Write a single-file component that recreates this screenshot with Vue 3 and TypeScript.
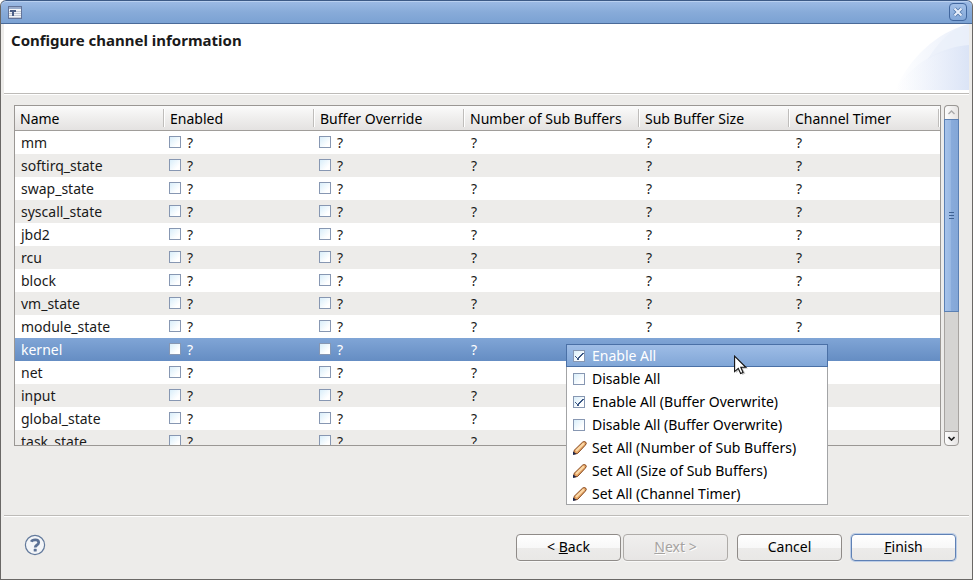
<script setup lang="ts">
import { reactive, ref } from 'vue'

interface Channel {
  name: string
  enabled: boolean
  override: boolean
}

interface MenuEntry {
  label: string
  kind: 'check' | 'edit'
  checked?: boolean
}

const columns: string[] = ['Name', 'Enabled', 'Buffer Override', 'Number of Sub Buffers', 'Sub Buffer Size', 'Channel Timer']

const channels = reactive<Channel[]>(
  ['mm', 'softirq_state', 'swap_state', 'syscall_state', 'jbd2', 'rcu', 'block', 'vm_state', 'module_state', 'kernel', 'net', 'input', 'global_state', 'task_state']
    .map((name) => ({ name, enabled: false, override: false })),
)

const selected = ref('kernel')

const menu = reactive<MenuEntry[]>([
  { label: 'Enable All', kind: 'check', checked: true },
  { label: 'Disable All', kind: 'check', checked: false },
  { label: 'Enable All (Buffer Overwrite)', kind: 'check', checked: true },
  { label: 'Disable All (Buffer Overwrite)', kind: 'check', checked: false },
  { label: 'Set All (Number of Sub Buffers)', kind: 'edit' },
  { label: 'Set All (Size of Sub Buffers)', kind: 'edit' },
  { label: 'Set All (Channel Timer)', kind: 'edit' },
])
const activeEntry = ref(0)
</script>

<template>
  <div class="window">
    <header class="titlebar">
      <svg class="app-icon" width="14" height="13" viewBox="0 0 14 13" shape-rendering="crispEdges">
        <rect width="14" height="13" fill="#63749a" />
        <rect x="1" y="1" width="12" height="2" fill="#9aaccb" />
        <rect x="1" y="3" width="12" height="9" fill="#f3f5f8" />
        <rect x="1" y="5" width="12" height="1" fill="#c4cad5" />
        <rect x="1" y="7" width="12" height="1" fill="#c4cad5" />
        <rect x="1" y="9" width="12" height="1" fill="#c4cad5" />
        <rect x="1" y="11" width="12" height="1" fill="#c4cad5" />
        <path d="M2 4h6v2H6v4H4V6H2z" fill="#4d6086" />
      </svg>
      <button class="close" type="button" aria-label="Close">
        <svg width="10" height="10" viewBox="0 0 10 10">
          <path d="M1.5 1.5l7 7M8.5 1.5l-7 7" stroke="#4f75a8" stroke-width="3.8" />
          <path d="M1.5 1.5l7 7M8.5 1.5l-7 7" stroke="#e6eefa" stroke-width="2.2" />
        </svg>
      </button>
    </header>

    <section class="banner">
      <h1>Configure channel information</h1>
      <svg class="swoosh" width="74" height="66" viewBox="0 0 74 66">
        <defs>
          <linearGradient id="outer" x1="0" x2="1">
            <stop offset="0" stop-color="#fff" />
            <stop offset="1" stop-color="#e8eefa" />
          </linearGradient>
          <linearGradient id="inner" x1="0" x2="1">
            <stop offset="0" stop-color="#f6f8fd" stop-opacity="0" />
            <stop offset="1" stop-color="#dbe4f6" />
          </linearGradient>
        </defs>
        <path d="M0 66C15 34 40 9 74 0v66z" fill="url(#outer)" />
        <path d="M33 35C42 20 55 5 74 0v24C59 24 45 28 33 35z" fill="#e9effa" opacity=".7" />
        <path d="M0 66C20 36 48 23 74 21v45z" fill="url(#inner)" />
      </svg>
    </section>

    <main class="content">
      <div class="table-frame">
        <table>
          <colgroup>
            <col class="col" /><col class="col" /><col class="col" /><col class="col-wide" /><col class="col" /><col />
          </colgroup>
          <thead>
            <tr>
              <th v-for="c in columns" :key="c" scope="col">{{ c }}</th>
            </tr>
          </thead>
          <tbody>
            <tr v-for="ch in channels" :key="ch.name" :class="{ selected: ch.name === selected }" @click="selected = ch.name">
              <td>{{ ch.name }}</td>
              <td><label class="cell"><input v-model="ch.enabled" class="tick" type="checkbox" />?</label></td>
              <td><label class="cell"><input v-model="ch.override" class="tick" type="checkbox" />?</label></td>
              <td>?</td>
              <td>?</td>
              <td>?</td>
            </tr>
          </tbody>
        </table>
      </div>
      <div class="scrollbar">
        <button class="step up" type="button" aria-label="Scroll up">
          <svg width="7" height="5" viewBox="0 0 7 5"><path d="M.5 4l3-3 3 3" fill="none" stroke="#aaa" stroke-width="1.4" /></svg>
        </button>
        <div class="thumb">
          <i></i><i></i><i></i>
        </div>
        <div class="track"></div>
        <button class="step down" type="button" aria-label="Scroll down">
          <svg width="7" height="5" viewBox="0 0 7 5"><path d="M.5 1l3 3 3-3" fill="none" stroke="#222" stroke-width="1.7" /></svg>
        </button>
      </div>
    </main>

    <footer class="actions">
      <button class="help" type="button" aria-label="Help">
        <svg width="22" height="22" viewBox="0 0 22 22">
          <circle cx="11" cy="11" r="9.6" fill="#f3f5f8" stroke="#62799b" stroke-width="1.2" />
          <path d="M7.3 7.7C8.3 5.3 14.7 4.8 14.7 8.5c0 2.7-3.5 2.3-3.5 5" fill="none" stroke="#5b7195" stroke-width="2.7" />
          <rect x="9.7" y="14.8" width="3" height="2.8" rx=".6" fill="#5b7195" />
        </svg>
      </button>
      <div class="pair">
        <button class="btn" type="button"><span>&lt; <u>B</u>ack</span></button>
        <button class="btn" type="button" disabled><span><u>N</u>ext &gt;</span></button>
      </div>
      <button class="btn" type="button">Cancel</button>
      <button class="btn primary" type="button"><span><u>F</u>inish</span></button>
    </footer>

    <div class="menu">
      <template v-for="(entry, i) in menu" :key="entry.label">
        <label v-if="entry.kind === 'check'" class="entry" :class="{ active: i === activeEntry }" @mouseenter="activeEntry = i">
          <input v-model="entry.checked" class="tick" type="checkbox" />{{ entry.label }}
        </label>
        <button v-else class="entry" :class="{ active: i === activeEntry }" type="button" @mouseenter="activeEntry = i">
          <svg width="14" height="14" viewBox="0 0 14 14">
            <path d="M1 9.5L9.5 1.2Q11.5-.2 12.8 1.2T12 4.5L4.5 12.5 1 13z" fill="#e5a565" stroke="#84451b" />
            <path d="M3 10L11 2.2" stroke="#fbd9a8" stroke-width="2" />
            <path d="M0 14V10.5l3.5 2.5z" fill="#1c2549" />
          </svg>{{ entry.label }}
        </button>
      </template>
    </div>

    <svg class="pointer" width="14" height="21" viewBox="0 0 14 21">
      <path d="M2 2v16l4-3 2.4 5 3-1.5-2.4-4.5 5-.5z" fill="#000" opacity=".22" />
      <path d="M.6 1.2v15.4l3.7-3.3 2.3 5.2 2.5-1.1-2.3-5.1h5z" fill="#fff" stroke="#111" stroke-width="1.1" />
    </svg>
  </div>
</template>

<style>
body {
  background: #fff;
}
</style>

<style scoped>
* {
  box-sizing: border-box;
}

.window {
  position: relative;
  display: flex;
  flex-direction: column;
  height: 100vh;
  overflow: hidden;
  border: 1px solid #6a6866;
  border-top: 0;
  border-radius: 6px 6px 0 0;
  background: #edecea;
  color: #1a1a1a;
  font: 14px/23px 'Noto Sans', 'Open Sans', sans-serif;
}

button,
input {
  margin: 0;
  font: inherit;
  color: inherit;
}

.titlebar {
  display: flex;
  flex: none;
  align-items: center;
  justify-content: space-between;
  height: 24px;
  margin: 0 -1px;
  padding: 0 5px 0 7px;
  border: 1px solid #4a6a98;
  border-top-color: #3d5a86;
  border-radius: 6px 6px 0 0;
  background: linear-gradient(#9dbbe5, #88abd9 50%, #7ba2d3);
  box-shadow: inset 0 1px #b9d0f0;
}

.app-icon {
  display: block;
}

.close {
  display: flex;
  align-items: center;
  justify-content: center;
  width: 18px;
  height: 18px;
  padding: 0;
  border: 1px solid #41679f;
  border-radius: 4px;
  background: linear-gradient(#a2bfe7, #82a7d8);
}

.banner {
  display: flex;
  flex: none;
  align-items: flex-start;
  justify-content: space-between;
  height: 70px;
  margin: 0 3px;
  padding-left: 7px;
  border-bottom: 1px solid #bdbbb8;
  background: #fff;
}

h1 {
  margin: 5px 0 0;
  font-size: 15px;
  font-weight: 700;
  line-height: 23px;
}

.swoosh {
  display: block;
}

.content {
  display: flex;
  flex: 1;
  gap: 3px;
  min-height: 0;
  margin: 0 3px;
  padding: 10px 10px 69px;
  border-top: 1px solid #fff;
  border-bottom: 1px solid #bdbbb8;
}

.table-frame {
  flex: 1;
  min-width: 0;
  overflow: hidden;
  border: 1px solid #9a9794;
  background: #fff;
}

table {
  width: 100%;
  border-collapse: separate;
  border-spacing: 0;
  table-layout: fixed;
}

.col {
  width: 150px;
}

.col-wide {
  width: 175px;
}

th {
  height: 25px;
  padding: 0 0 0 5px;
  border-bottom: 1px solid #a09d9a;
  background:
    linear-gradient(90deg, #bfbdbb 50%, #fff 50%) right 3px / 2px 18px no-repeat,
    linear-gradient(#fbfbfb, #efeeed 50%, #e4e2e1);
  color: #000;
  font-weight: 400;
  text-align: left;
  white-space: nowrap;
}

td {
  height: 23px;
  padding: 0 0 0 6px;
  line-height: 23px;
}

tbody tr:nth-child(even) {
  background: #edecea;
}

tbody tr.selected {
  background: linear-gradient(#80a5d6, #658dc3);
  color: #fff;
}

.cell {
  display: flex;
  gap: 6px;
  align-items: center;
  height: 23px;
  margin-left: -2px;
}

.tick {
  flex: none;
  width: 12px;
  height: 12px;
  appearance: none;
  border: 1px solid #8797b2;
  background: linear-gradient(135deg, #d9eefa, #fff 75%);
}

.cell .tick {
  margin-bottom: 1px;
}

.tick:checked {
  background:
    linear-gradient(45deg, transparent 42%, #3c5784 42% 58%, transparent 58%) 1px 5px / 4px 4px no-repeat,
    linear-gradient(135deg, transparent 42%, #3c5784 42% 57%, transparent 57%) 3px 2px / 7px 7px no-repeat,
    linear-gradient(135deg, #d9eefa, #fff 75%);
}

.scrollbar {
  display: flex;
  flex: none;
  flex-direction: column;
  width: 15px;
}

.step {
  display: flex;
  flex: none;
  align-items: center;
  justify-content: center;
  height: 15px;
  padding: 0;
  border: 1px solid #9a9794;
  background: linear-gradient(90deg, #fcfcfc, #e6e4e3);
}

.up {
  height: 14px;
  border-bottom: 0;
  border-radius: 4px 4px 0 0;
}

.down {
  border-radius: 0 0 4px 4px;
}

.thumb {
  display: flex;
  flex: 192 1 0;
  flex-direction: column;
  gap: 2px;
  align-items: center;
  justify-content: center;
  border: 1px solid #5b80b3;
  background: linear-gradient(90deg, #a7c3ea, #97b7e2 50%, #88abdb 50%, #84a7d7);
}

.thumb i {
  width: 5px;
  height: 1px;
  background: #3e6192;
}

.track {
  flex: 120 1 0;
  border: solid #a7a4a1;
  border-width: 0 1px;
  background: #d5d4d2;
}

.actions {
  display: flex;
  flex: none;
  gap: 9px;
  align-items: center;
  height: 63px;
  margin: 0 3px;
  padding: 0 13px 2px 20px;
  border-top: 1px solid #fff;
}

.help {
  height: 26px;
  margin-right: auto;
  padding: 0 0 4px;
  border: 0;
  background: none;
}

.help svg {
  display: block;
}

.pair {
  display: flex;
  gap: 2px;
}

.btn {
  width: 105px;
  height: 27px;
  padding: 0;
  border: 1px solid #8f8b88;
  border-radius: 4px;
  background: linear-gradient(#fff, #f8f8f8 50%, #ecebea 51%, #e9e8e6);
  box-shadow: 0 1px #f8f8f7;
  color: #000;
  line-height: 24px;
}

.btn:disabled {
  border-color: #aeaba8;
  background: linear-gradient(#f0efee, #e7e5e4);
  color: #a5a2a0;
  text-shadow: 1px 1px #fff;
}

.primary {
  border-color: #5f81b5;
  box-shadow: 0 0 0 1px #bccde6;
}

.menu {
  position: absolute;
  top: 344px;
  left: 565px;
  display: flex;
  flex-direction: column;
  width: 262px;
  background: #fff;
  box-shadow: inset 0 0 0 1px #a3a4a6;
  color: #000;
}

.entry {
  display: flex;
  gap: 7px;
  align-items: center;
  height: 23px;
  padding: 0 7px;
  border: 0;
  background: none;
  text-align: left;
  white-space: nowrap;
}

button.entry {
  gap: 5px;
}

.active {
  background: linear-gradient(#a0bee7, #7fa5d6);
  box-shadow: inset 0 0 0 1px #4a70a6;
  color: #fff;
}

.pointer {
  position: absolute;
  top: 355px;
  left: 733px;
  pointer-events: none;
}
</style>
